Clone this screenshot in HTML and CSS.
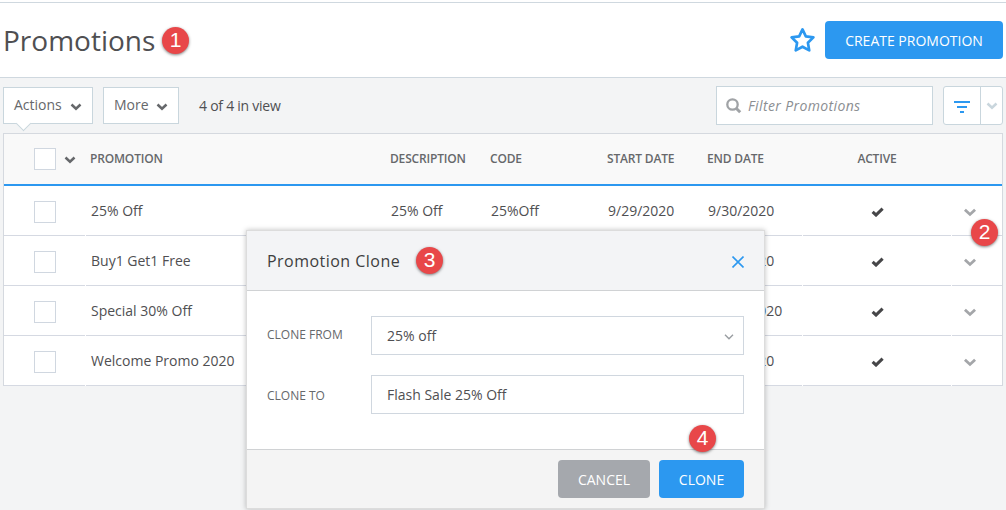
FILE: index.html
```html
<!DOCTYPE html>
<html lang="en">
<head>
  <meta charset="UTF-8">
  <title>Promotions</title>
  <meta name="viewport" content="width=device-width, initial-scale=1.0">
  <link rel="stylesheet" href="styles.css">
</head>
<body>
  <svg class="sprite">
    <symbol id="chevron" viewBox="0 0 12 8"><path d="M1.5 1.5 6 5.7l4.500-4.200" fill="none" stroke="currentColor" stroke-width="2.500"/></symbol>
    <symbol id="check" viewBox="0 0 13 10"><path d="M1.600 4.900 5 8 11.600 1.600" fill="none" stroke="currentColor" stroke-width="3.100"/></symbol>
  </svg>

  <header class="page-header">
    <h1>Promotions</h1>
    <span class="badge">1</span>
    <svg class="star" viewBox="0 0 26 26"><path d="M13 2.300l3.200 6.700 7.300 1-5.300 5.100 1.300 7.400L13 19l-6.500 3.500 1.300-7.400L2.500 10l7.300-1z" fill="none" stroke="currentColor" stroke-width="2.600" stroke-linejoin="round"/></svg>
    <button class="btn btn-create">CREATE PROMOTION</button>
  </header>

  <div class="toolbar">
    <button class="drop actions">Actions <svg class="chev"><use href="#chevron"/></svg></button>
    <button class="drop more">More <svg class="chev"><use href="#chevron"/></svg></button>
    <span class="count">4 of 4 in view</span>
    <div class="search">
      <svg viewBox="0 0 16 16"><circle cx="6.500" cy="6.500" r="5.200" fill="none" stroke="currentColor" stroke-width="2.300"/><path d="M10.200 10.200l4 4" stroke="currentColor" stroke-width="3"/></svg>
      <input type="text" placeholder="Filter Promotions">
    </div>
    <div class="filter">
      <button class="filter-main"><svg viewBox="0 0 16 12"><path d="M0 1h16M3 6h10M6 11h4" stroke="currentColor" stroke-width="2"/></svg></button>
      <button class="filter-more"><svg class="chev"><use href="#chevron"/></svg></button>
    </div>
  </div>

  <div class="grid">
    <div class="row head">
      <div class="select"><span class="box"></span><svg class="chev"><use href="#chevron"/></svg></div>
      <div>PROMOTION</div>
      <div>DESCRIPTION</div>
      <div>CODE</div>
      <div>START DATE</div>
      <div>END DATE</div>
      <div class="center">ACTIVE</div>
      <div></div>
    </div>
    <div class="row">
      <div class="select"><span class="box"></span></div>
      <div>25% Off</div>
      <div>25% Off</div>
      <div>25%Off</div>
      <div>9/29/2020</div>
      <div class="end">9/30/2020</div>
      <div class="center"><svg class="check"><use href="#check"/></svg></div>
      <div class="menu"><svg class="chev"><use href="#chevron"/></svg><span class="badge badge-menu">2</span></div>
    </div>
    <div class="row">
      <div class="select"><span class="box"></span></div>
      <div>Buy1 Get1 Free</div>
      <div></div>
      <div></div>
      <div></div>
      <div class="end">9/30/2020</div>
      <div class="center"><svg class="check"><use href="#check"/></svg></div>
      <div class="menu"><svg class="chev"><use href="#chevron"/></svg></div>
    </div>
    <div class="row">
      <div class="select"><span class="box"></span></div>
      <div>Special 30% Off</div>
      <div></div>
      <div></div>
      <div></div>
      <div class="end">10/30/2020</div>
      <div class="center"><svg class="check"><use href="#check"/></svg></div>
      <div class="menu"><svg class="chev"><use href="#chevron"/></svg></div>
    </div>
    <div class="row">
      <div class="select"><span class="box"></span></div>
      <div>Welcome Promo 2020</div>
      <div></div>
      <div></div>
      <div></div>
      <div class="end">9/30/2020</div>
      <div class="center"><svg class="check"><use href="#check"/></svg></div>
      <div class="menu"><svg class="chev"><use href="#chevron"/></svg></div>
    </div>
  </div>

  <div class="modal">
    <div class="modal-header">
      <h2>Promotion Clone</h2>
      <span class="badge">3</span>
      <svg class="close" viewBox="0 0 12 12"><path d="M.5.5l11 11M11.500.5l-11 11" stroke="currentColor" stroke-width="1.600"/></svg>
    </div>
    <div class="modal-body">
      <label>CLONE FROM</label>
      <div class="field">25% off <svg class="thin" viewBox="0 0 10 6"><path d="M1 .8l4 3.900 4-3.900" fill="none" stroke="currentColor" stroke-width="1.400"/></svg></div>
      <label class="label-to">CLONE TO</label>
      <div class="field">Flash Sale 25% Off</div>
    </div>
    <div class="modal-footer">
      <button class="btn btn-cancel">CANCEL</button>
      <button class="btn btn-clone">CLONE</button>
      <span class="badge badge-clone">4</span>
    </div>
  </div>
</body>
</html>
```
FILE: styles.css
```css
* {
  box-sizing: border-box;
}
body {
  margin: 0;
  height: 510px;
  overflow: hidden;
  position: relative;
  padding-top: 2px;
  background: #f3f4f5;
  font-family: "Open Sans", sans-serif;
  font-size: 14px;
  color: #4f4f52;
}
button, input {
  font-family: inherit;
  font-size: 14px;
  padding: 0;
  margin: 0;
}
.sprite {
  display: none;
}
body::before {
  content: "";
  position: absolute;
  top: 0;
  left: 0;
  right: 0;
  height: 2px;
  background: #fff;
}

/* page header */
.page-header {
  display: flex;
  align-items: center;
  height: 76px;
  padding: 0 3px;
  background: #fff;
  border-top: 1px solid #cfd8df;
  border-bottom: 1px solid #cfd8df;
}
h1 {
  margin: 0 6px 0 0;
  font-size: 28px;
  font-weight: 400;
  line-height: 40px;
  width: 153px;
  white-space: nowrap;
}
.badge {
  width: 27px;
  height: 27px;
  border-radius: 50%;
  background: #e84749;
  box-shadow: 0 1px 3px rgba(0,0,0,0.5);
  color: #fff;
  font-family: "Liberation Sans", sans-serif;
  font-size: 21px;
  line-height: 26px;
  text-align: center;
}
.star {
  width: 27px;
  height: 27px;
  margin-left: auto;
  margin-right: 9px;
  color: #2c98f0;
}
.btn {
  height: 38px;
  border: none;
  border-radius: 4px;
  background: #2c98f0;
  color: #fff;
}
.btn-create {
  width: 178px;
}

/* toolbar */
.toolbar {
  display: flex;
  align-items: center;
  padding: 8px 3px;
  height: 55px;
}
.drop {
  display: flex;
  align-items: center;
  justify-content: space-between;
  position: relative;
  height: 37px;
  padding: 0 10px 2px;
  border: 1px solid #c9d6dd;
  background: #fff;
  color: #66686b;
}
.actions {
  width: 90px;
}
.actions::after {
  content: "";
  position: absolute;
  left: 14px;
  bottom: -6px;
  width: 10px;
  height: 10px;
  background: #fff;
  border: solid #c9d6dd;
  border-width: 0 1px 1px 0;
  transform: rotate(45deg);
}
.more {
  width: 76px;
  margin-left: 10px;
}
.chev {
  width: 12px;
  height: 8px;
  flex: none;
}
.drop .chev {
  margin-top: 5px;
}
.count {
  margin-left: 20px;
  letter-spacing: -0.25px;
}
.search {
  display: flex;
  align-items: center;
  width: 217px;
  height: 39px;
  margin-left: auto;
  padding-left: 9px;
  border: 1px solid #c9d6dd;
  background: #fff;
  color: #a0a3a6;
}
.search svg {
  width: 16px;
  height: 16px;
}
.search input {
  width: 180px;
  margin-left: 6px;
  border: none;
  background: none;
  letter-spacing: 0.38px;
}
.search input::placeholder {
  color: #8b8e92;
  font-style: italic;
}
.filter {
  display: flex;
  width: 60px;
  height: 39px;
  margin-left: 10px;
  border: 1px solid #c9d6dd;
  border-radius: 3px;
  background: #fff;
}
.filter button {
  display: flex;
  align-items: center;
  justify-content: center;
  border: none;
  background: none;
}
.filter-main {
  width: 36px;
  color: #2c98f0;
}
.filter-main svg {
  width: 16px;
  height: 12px;
  margin-top: 3px;
}
.filter .filter-more {
  flex: 1;
  border-left: 1px solid #c9d6dd;
  color: #c9d6dd;
}

/* promotions grid */
.grid {
  width: 1000px;
  margin-left: 3px;
  border: 1px solid #d5d9df;
  border-bottom: none;
  background: #fff;
}
.row {
  display: grid;
  grid-template-columns: 82px 300px 100px 117px 100px 100px 149px 50px;
  height: 50px;
}
.row > div {
  display: flex;
  align-items: center;
  padding-left: 5px;
  border-bottom: 1px solid #d5d9e2;
}
.row .select {
  margin-right: 1px;
  padding-left: 30px;
}
.row .end {
  margin-right: 1px;
}
.row > .center {
  justify-content: center;
  margin-right: 1px;
  padding-left: 0;
}
.head {
  height: 52px;
  background: #f9f9f9;
  border-bottom: 2px solid #2c98f0;
  color: #66686b;
  font-size: 12px;
  font-weight: 600;
  letter-spacing: -0.17px;
}
.head > div {
  border: none;
  padding-left: 4px;
  padding-bottom: 1px;
}
.box {
  width: 22px;
  height: 22px;
  margin-top: 2px;
  border: 1px solid #d0d7e0;
  background: #fff;
}
.head .box {
  margin-top: 1px;
}
.select .chev {
  margin-left: 8px;
  margin-top: 3px;
}
.check {
  width: 13px;
  height: 10px;
  margin-top: 3px;
  color: #464648;
}
.row .menu {
  position: relative;
  padding-left: 11px;
  color: #a4a6a9;
}
.menu .chev {
  width: 14px;
  height: 9px;
  margin-top: 3px;
}
.badge-menu {
  position: absolute;
  left: 19px;
  top: 33px;
}

/* clone dialog */
.modal {
  position: absolute;
  left: 246px;
  top: 230px;
  width: 519px;
  height: 279px;
  border: 1px solid #dcdcdc;
  background: #fff;
  box-shadow: 0 0 5px rgba(0,0,0,0.25);
}
.modal-header {
  display: flex;
  align-items: center;
  height: 60px;
  padding: 0 20px;
  background: #f3f4f6;
  border-bottom: 1px solid #d0d2d4;
}
h2 {
  width: 133px;
  margin: 0 16px 0 0;
  font-size: 16px;
  font-weight: 400;
  letter-spacing: 0.47px;
  color: #3e3e40;
  white-space: nowrap;
}
.close {
  width: 12px;
  height: 12px;
  margin-left: auto;
  margin-top: 2px;
  color: #2c98f0;
}
.modal-body {
  display: grid;
  grid-template-columns: 104px 373px;
  grid-auto-rows: 39px;
  row-gap: 20px;
  height: 158px;
  padding: 25px 20px;
}
label {
  line-height: 37px;
  font-size: 12px;
  color: #66686b;
}
.label-to {
  line-height: 41px;
}
.field {
  display: flex;
  align-items: center;
  justify-content: space-between;
  padding: 0 9px 0 15px;
  border: 1px solid #d0d7df;
}
.thin {
  width: 10px;
  height: 6px;
  margin-top: 3px;
  color: #999da1;
}
.modal-footer {
  display: flex;
  justify-content: flex-end;
  gap: 9px;
  position: relative;
  height: 59px;
  padding: 10px 20px;
  background: #f4f4f4;
  border-top: 1px solid #d0d2d4;
}
.btn-cancel {
  width: 92px;
  background: #a5a8ad;
}
.btn-clone {
  width: 85px;
}
.badge-clone {
  position: absolute;
  right: 48px;
  top: -25px;
}
```
